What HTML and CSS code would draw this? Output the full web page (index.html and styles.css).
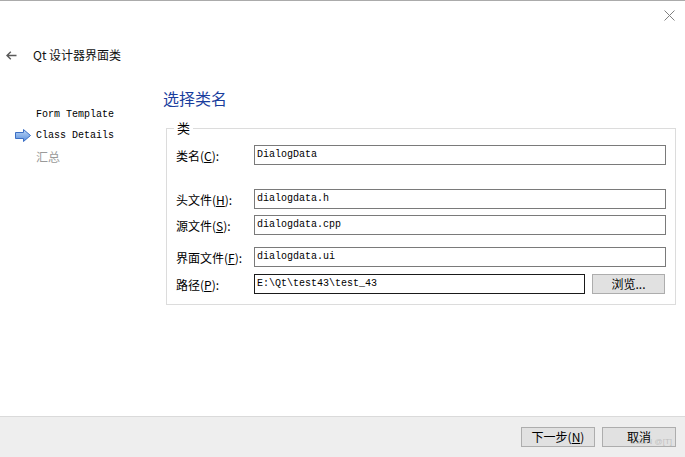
FILE: index.html
```html
<!DOCTYPE html>
<html>
<head>
<meta charset="utf-8">
<link rel="stylesheet" href="styles.css">
</head>
<body>
<div class="topline"></div>
<div class="titlebar">
  <svg class="close" width="11" height="11" viewBox="0 0 11 11"><path d="M0.5 0.5 L10.5 10.5 M10.5 0.5 L0.5 10.5" stroke="#808080" stroke-width="1" fill="none"/></svg>
</div>
<div class="header">
  <svg class="back" width="11" height="9" viewBox="0 0 11 9"><path d="M10.5 4.5 H1 M4.8 0.7 L1 4.5 L4.8 8.3" stroke="#5a5a5a" stroke-width="1.4" fill="none"/></svg>
  <span class="title">Qt 设计器界面类</span>
</div>
<div class="main">
  <div class="sidebar">
    <div class="step"><span class="marker"></span><span class="mono">Form Template</span></div>
    <div class="step"><span class="marker"><svg width="16" height="13" viewBox="0 0 16 13"><defs><linearGradient id="g" x1="0" y1="0" x2="0" y2="1"><stop offset="0" stop-color="#bcd6f7"/><stop offset="1" stop-color="#5a8fdc"/></linearGradient></defs><polygon points="0.5,3.5 8.5,3.5 8.5,0.5 15.5,6.5 8.5,12.5 8.5,9.5 0.5,9.5" fill="url(#g)" stroke="#3c6fc4" stroke-width="1"/></svg></span><span class="mono">Class Details</span></div>
    <div class="step"><span class="marker"></span><span class="done">汇总</span></div>
  </div>
  <div class="content">
    <div class="heading">选择类名</div>
    <fieldset class="group">
      <legend>类</legend>
      <div class="row r1"><span class="label">类名(<u>C</u>):</span><div class="field">DialogData</div></div>
      <div class="row r2"><span class="label">头文件(<u>H</u>):</span><div class="field">dialogdata.h</div></div>
      <div class="row r3"><span class="label">源文件(<u>S</u>):</span><div class="field">dialogdata.cpp</div></div>
      <div class="row r4"><span class="label">界面文件(<u>F</u>):</span><div class="field">dialogdata.ui</div></div>
      <div class="row r5"><span class="label">路径(<u>P</u>):</span><div class="field path">E:\Qt\test43\test_43</div><div class="btn browse">浏览...</div></div>
    </fieldset>
  </div>
</div>
<div class="footer">
  <div class="btn">下一步(<u>N</u>)</div>
  <div class="btn cancel">取消<span class="wm">CSDN @[T]</span></div>
</div>
</body>
</html>
```
FILE: styles.css
```css
html, body {
  margin: 0;
  padding: 0;
}
body {
  width: 685px;
  height: 457px;
  background: #ffffff;
  font-family: "Noto Sans CJK SC", "Liberation Sans", sans-serif;
  font-size: 12px;
  color: #000;
  display: flex;
  flex-direction: column;
  overflow: hidden;
}
.topline {
  height: 1px;
  background: #ababab;
  flex: none;
}
.titlebar {
  height: 42px;
  box-sizing: border-box;
  padding: 9px 10px 0 0;
  display: flex;
  justify-content: flex-end;
  align-items: flex-start;
  flex: none;
}
.header {
  height: 24px;
  display: flex;
  align-items: center;
  flex: none;
}
.back {
  margin-left: 6px;
  margin-right: 16px;
}
.title {
  font-size: 12px;
  line-height: 16px;
  color: #111;
}
.main {
  flex: 1;
  display: flex;
  min-height: 0;
}
.sidebar {
  width: 164px;
  flex: none;
  padding-top: 37px;
  box-sizing: border-box;
}
.step {
  display: flex;
  align-items: center;
  height: 21px;
}
.marker {
  width: 21px;
  margin-left: 15px;
  display: flex;
  align-items: center;
}
.mono {
  font-family: "Liberation Mono", monospace;
  font-size: 10px;
  color: #000;
}
.done {
  color: #9a9a9a;
  font-size: 12px;
}
.content {
  flex: 1;
  padding-top: 21px;
}
.heading {
  font-size: 16px;
  line-height: 20px;
  color: #1a3e9e;
  margin-left: -1px;
}
.group {
  margin: 12px 0 0 2px;
  width: 510px;
  box-sizing: border-box;
  border: 1px solid #dcdcdc;
  padding: 0 9px 10px 9px;
}
.group legend {
  font-size: 13px;
  line-height: 16px;
  padding: 0 3px;
  margin-left: -2px;
}
.row {
  display: flex;
  align-items: center;
  height: 20px;
}
.r1 { margin-top: 9px; }
.r2 { margin-top: 24px; }
.r3 { margin-top: 6px; }
.r4 { margin-top: 12px; }
.r5 { margin-top: 7px; }
.label {
  width: 78px;
  flex: none;
  font-size: 12px;
}
.field {
  width: 412px;
  height: 20px;
  box-sizing: border-box;
  border: 1px solid #7a7a7a;
  padding: 0 2px;
  font-family: "Liberation Mono", monospace;
  font-size: 10px;
  line-height: 18px;
  white-space: nowrap;
}
.field.path {
  width: 331px;
  border-color: #1a1a1a;
}
.btn {
  width: 74px;
  height: 20px;
  box-sizing: border-box;
  border: 1px solid #adadad;
  background: #e1e1e1;
  font-size: 12px;
  line-height: 18px;
  text-align: center;
  color: #000;
  position: relative;
}
.browse {
  margin-left: 7px;
  width: 73px;
}
.footer {
  height: 41px;
  box-sizing: border-box;
  border-top: 1px solid #dadada;
  background: #eeeeee;
  flex: none;
  display: flex;
  justify-content: flex-end;
  padding: 10px 9px 0 0;
  gap: 7px;
}
.wm {
  position: absolute;
  right: 3px;
  top: 9px;
  font-family: "Liberation Sans", sans-serif;
  font-size: 8px;
  line-height: 10px;
  color: rgba(120,120,120,0.35);
}
```
